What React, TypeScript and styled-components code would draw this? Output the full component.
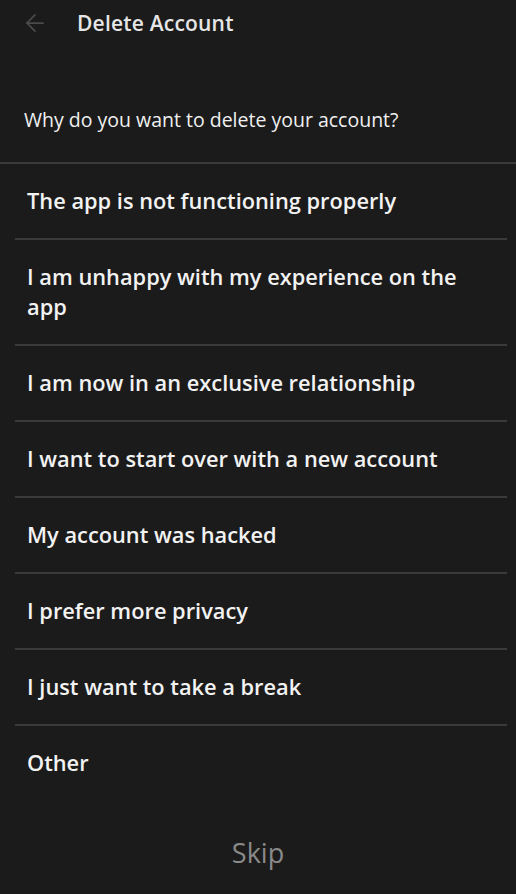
import { FC } from "react";
import styled, { createGlobalStyle } from "styled-components";
import { ArrowLeft } from "lucide-react";

const GlobalStyle = createGlobalStyle`
  html, body {
    margin: 0;
    padding: 0;
    background-color: #1b1b1b;
  }
  body {
    font-family: "Open Sans", Roboto, "Noto Sans", sans-serif;
    -webkit-font-smoothing: antialiased;
  }
`;

const Screen = styled.div`
  width: 516px;
  height: 894px;
  background-color: #1b1b1b;
  display: flex;
  flex-direction: column;
  overflow: hidden;
`;

const Header = styled.div`
  height: 46px;
  display: flex;
  align-items: center;
  padding-left: 21px;
`;

const BackButton = styled.button`
  background: none;
  border: none;
  padding: 0;
  display: flex;
  align-items: center;
  color: #4b4b4b;
  cursor: pointer;
`;

const Title = styled.h1`
  margin: 0 0 0 28px;
  font-size: 21px;
  font-weight: 600;
  letter-spacing: 0.2px;
  color: #e6e6e6;
`;

const Question = styled.p`
  margin: 0;
  padding: 62px 24px 30px;
  font-size: 19.5px;
  font-weight: 400;
  color: #f0f0f0;
  line-height: 24px;
`;

const Divider = styled.div`
  height: 2px;
  background-color: #3a3a3a;
`;

const ReasonList = styled.ul`
  list-style: none;
  margin: 0;
  padding: 0 9px 0 15px;
`;

const Reason = styled.li`
  border-bottom: 2px solid #3a3a3a;
  padding: 22px 30px 22px 12px;
  font-size: 21.8px;
  font-weight: 600;
  line-height: 30px;
  color: #f2f2f2;
  cursor: pointer;

  &:last-child {
    border-bottom: none;
  }
`;

const Footer = styled.div`
  flex: 1;
  display: flex;
  align-items: flex-start;
  justify-content: center;
  padding-top: 34px;
`;

const SkipButton = styled.button`
  background: none;
  border: none;
  padding: 0;
  font-family: inherit;
  font-size: 27px;
  color: #8a8a8a;
  cursor: pointer;
`;

const reasons = [
  "The app is not functioning properly",
  "I am unhappy with my experience on the app",
  "I am now in an exclusive relationship",
  "I want to start over with a new account",
  "My account was hacked",
  "I prefer more privacy",
  "I just want to take a break",
  "Other",
];

const App: FC = () => {
  return (
    <>
      <GlobalStyle />
      <Screen>
        <Header>
          <BackButton aria-label="Back">
            <ArrowLeft size={28} strokeWidth={1.5} />
          </BackButton>
          <Title>Delete Account</Title>
        </Header>

        <Question>Why do you want to delete your account?</Question>
        <Divider />

        <ReasonList>
          {reasons.map((reason) => (
            <Reason key={reason}>{reason}</Reason>
          ))}
        </ReasonList>

        <Footer>
          <SkipButton>Skip</SkipButton>
        </Footer>
      </Screen>
    </>
  );
};

export default App;
